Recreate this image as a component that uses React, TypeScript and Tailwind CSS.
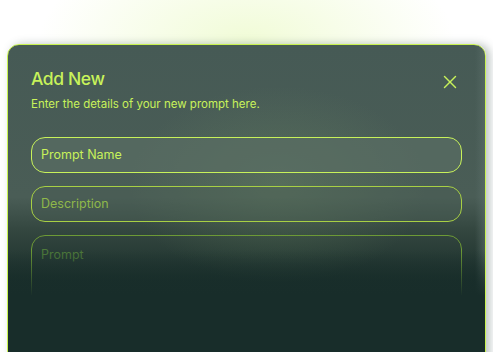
import { X } from "lucide-react";

export default function App() {
  return (
    <div className="relative h-[352px] w-[493px] overflow-hidden bg-white font-['Inter',sans-serif]">
      <div className="pointer-events-none absolute left-1/2 top-[-60px] h-[200px] w-[420px] -translate-x-1/2 rounded-full bg-[radial-gradient(ellipse_at_center,rgba(214,245,140,0.35),rgba(255,255,255,0)_70%)]" />
      <div className="relative mx-[7px] mt-[44px] h-[340px] overflow-hidden rounded-[12px] border border-[#c8f24f] bg-[linear-gradient(180deg,#465a55_0%,#4a5d56_45%,#33463f_55%,#1a2f2b_70%,#182d2a_100%)] shadow-[4px_0_8px_rgba(70,90,85,0.35)]">
        <div className="pointer-events-none absolute left-[120px] top-[40px] h-[200px] w-[300px] rounded-full bg-[radial-gradient(ellipse_at_center,rgba(110,140,100,0.35),rgba(0,0,0,0)_70%)]" />
        <div className="pointer-events-none absolute inset-y-0 right-0 w-[10px] bg-[linear-gradient(90deg,rgba(90,110,105,0),rgba(90,110,105,0.6))]" />
        <div className="relative px-[23px] pt-[22px]">
          <div className="flex items-start justify-between">
            <div>
              <h2 className="text-[17.5px] font-medium leading-[24px] tracking-[-0.4px] text-[#c8f25a]">
                Add New
              </h2>
              <p className="mt-[5px] text-[11.5px] leading-[16px] text-[#c8f25a]">
                Enter the details of your new prompt here.
              </p>
            </div>
            <button className="mr-[1px] mt-[4px] text-[#c8f25a]">
              <X size={22} strokeWidth={1.6} />
            </button>
          </div>
          <div className="mt-[25px] flex flex-col gap-[13px]">
            <div className="flex h-[36px] items-center rounded-[14px] border border-[#c8f25a] bg-[#5a6e64]/70 px-[9px] text-[12.5px] text-[#c8f25a]">
              Prompt Name
            </div>
            <div className="flex h-[36px] items-center rounded-[14px] border border-[#a8d044] bg-[#4a5e56]/40 px-[9px] text-[12.5px] text-[#8fb84a]">
              Description
            </div>
            <div className="h-[100px] rounded-[14px] border border-[#6d9a36] px-[9px] pt-[10px] text-[12.5px] text-[#4e7a3a]">
              Prompt
            </div>
          </div>
        </div>
        <div className="pointer-events-none absolute inset-x-0 top-[205px] h-[46px] bg-[linear-gradient(180deg,rgba(24,45,42,0)_0%,#182d2a_100%)]" />
        <div className="pointer-events-none absolute inset-x-0 bottom-0 top-[250px] bg-[#182d2a]" />
      </div>
    </div>
  );
}
